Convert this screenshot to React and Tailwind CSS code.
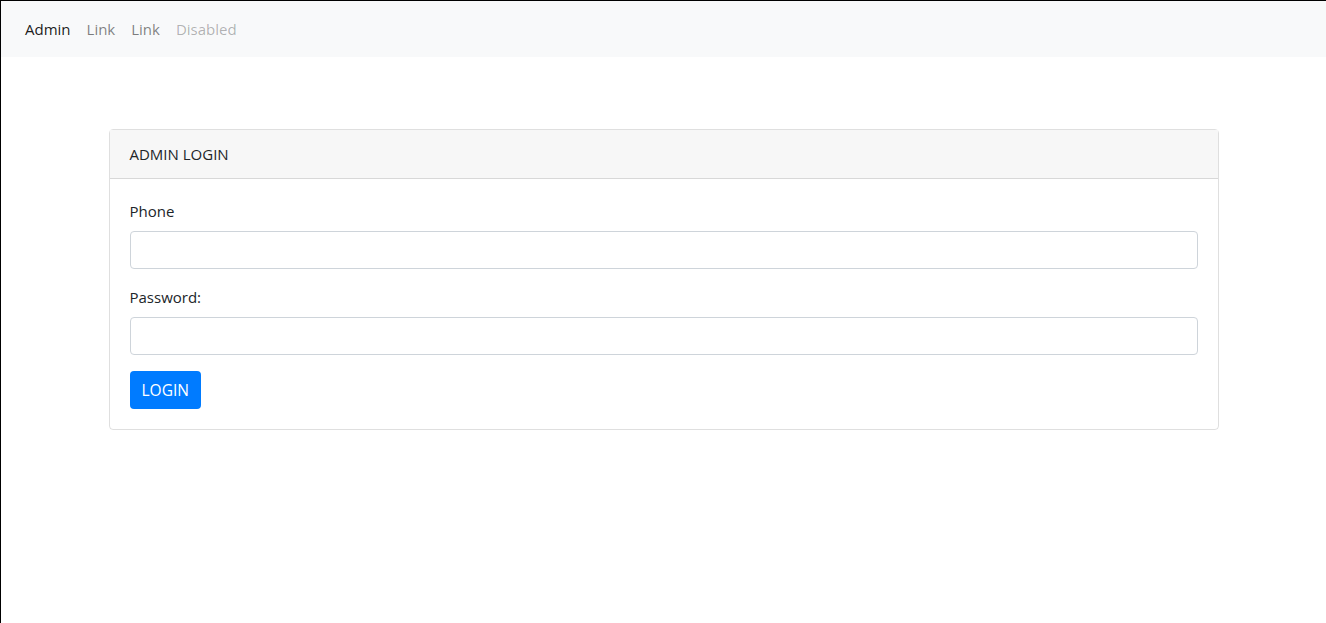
import React, { useState } from "react";

const App = () => {
  const [phone, setPhone] = useState("");
  const [password, setPassword] = useState("");

  return (
    <div
      className="min-h-screen border-t border-l border-black bg-white text-[15px] leading-6 text-[#212529]"
      style={{ fontFamily: '"Open Sans", "Noto Sans", sans-serif' }}
    >
      {/* Navbar */}
      <nav className="flex h-14 items-center bg-[#f8f9fa] px-4">
        <ul className="flex">
          <li><a href="#" className="block px-2 py-2 text-black/90">Admin</a></li>
          <li><a href="#" className="block px-2 py-2 text-black/50">Link</a></li>
          <li><a href="#" className="block px-2 py-2 text-black/50">Link</a></li>
          <li><span className="block px-2 py-2 text-black/30">Disabled</span></li>
        </ul>
      </nav>

      {/* Login card */}
      <div className="mx-auto mt-[72px] w-[1110px]">
        <div className="rounded border border-black/[0.125]">
          <div className="border-b border-black/[0.125] bg-[#f7f7f7] px-5 py-3">ADMIN LOGIN</div>
          <form className="p-5" onSubmit={(e) => e.preventDefault()}>
            <div className="mb-4">
              <label className="mb-2 block">Phone</label>
              <input
                type="text"
                value={phone}
                onChange={(e) => setPhone(e.target.value)}
                className="block h-[38px] w-full rounded border border-[#ced4da] px-3 outline-none"
              />
            </div>
            <div className="mb-4">
              <label className="mb-2 block">Password:</label>
              <input
                type="password"
                value={password}
                onChange={(e) => setPassword(e.target.value)}
                className="block h-[38px] w-full rounded border border-[#ced4da] px-3 outline-none"
              />
            </div>
            <button type="submit" className="h-[38px] rounded bg-[#007bff] px-3 text-[15.5px] text-white">
              LOGIN
            </button>
          </form>
        </div>
      </div>
    </div>
  );
};

export default App;
